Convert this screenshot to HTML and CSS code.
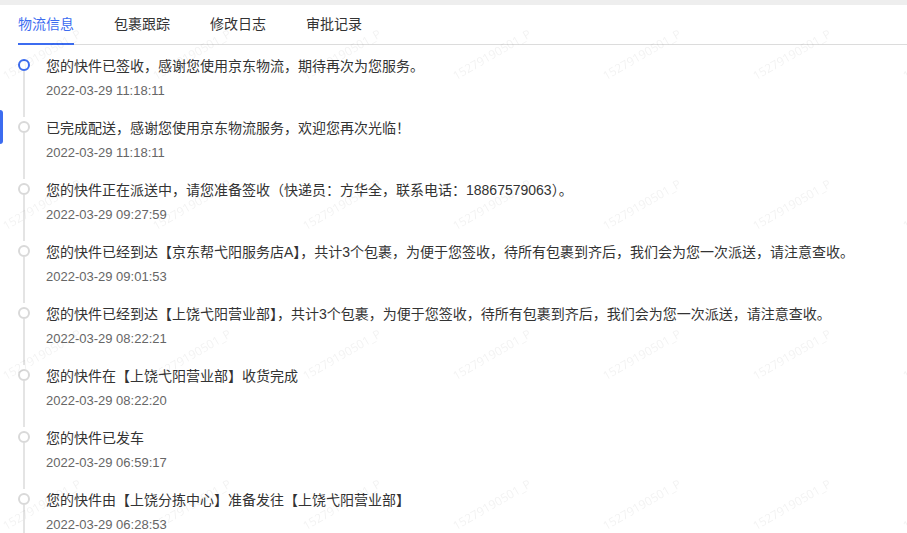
FILE: index.html
```html
<!DOCTYPE html>
<html lang="zh-CN">
<head>
  <meta charset="UTF-8">
  <meta name="viewport" content="width=device-width, initial-scale=1.0">
  <title>物流信息</title>
  <link rel="stylesheet" href="styles.css">
</head>
<body>
  <div class="topband"></div>

  <nav class="tabs">
    <span class="tab active">物流信息</span>
    <span class="tab">包裹跟踪</span>
    <span class="tab">修改日志</span>
    <span class="tab">审批记录</span>
  </nav>

  <ul class="timeline">
    <li class="item first">
      <div class="rail"><span class="dot"></span><span class="tail"></span></div>
      <div class="content">
        <div class="title">您的快件已签收，感谢您使用京东物流，期待再次为您服务。</div>
        <div class="time">2022-03-29 11:18:11</div>
      </div>
    </li>
    <li class="item">
      <div class="rail"><span class="dot"></span><span class="tail"></span></div>
      <div class="content">
        <div class="title">已完成配送，感谢您使用京东物流服务，欢迎您再次光临！</div>
        <div class="time">2022-03-29 11:18:11</div>
      </div>
    </li>
    <li class="item">
      <div class="rail"><span class="dot"></span><span class="tail"></span></div>
      <div class="content">
        <div class="title">您的快件正在派送中，请您准备签收（快递员：方华全，联系电话：18867579063）。</div>
        <div class="time">2022-03-29 09:27:59</div>
      </div>
    </li>
    <li class="item">
      <div class="rail"><span class="dot"></span><span class="tail"></span></div>
      <div class="content">
        <div class="title">您的快件已经到达【京东帮弋阳服务店A】，共计3个包裹，为便于您签收，待所有包裹到齐后，我们会为您一次派送，请注意查收。</div>
        <div class="time">2022-03-29 09:01:53</div>
      </div>
    </li>
    <li class="item">
      <div class="rail"><span class="dot"></span><span class="tail"></span></div>
      <div class="content">
        <div class="title">您的快件已经到达【上饶弋阳营业部】，共计3个包裹，为便于您签收，待所有包裹到齐后，我们会为您一次派送，请注意查收。</div>
        <div class="time">2022-03-29 08:22:21</div>
      </div>
    </li>
    <li class="item">
      <div class="rail"><span class="dot"></span><span class="tail"></span></div>
      <div class="content">
        <div class="title">您的快件在【上饶弋阳营业部】收货完成</div>
        <div class="time">2022-03-29 08:22:20</div>
      </div>
    </li>
    <li class="item">
      <div class="rail"><span class="dot"></span><span class="tail"></span></div>
      <div class="content">
        <div class="title">您的快件已发车</div>
        <div class="time">2022-03-29 06:59:17</div>
      </div>
    </li>
    <li class="item">
      <div class="rail"><span class="dot"></span><span class="tail"></span></div>
      <div class="content">
        <div class="title">您的快件由【上饶分拣中心】准备发往【上饶弋阳营业部】</div>
        <div class="time">2022-03-29 06:28:53</div>
      </div>
    </li>
  </ul>

  <div class="side-tab"></div>
  <div class="watermark" id="watermark"></div>

  <script>
    const wm = document.getElementById("watermark");
    for (let i = 0; i < 28; i++) {
      const cell = document.createElement("div");
      cell.className = "wm-cell";
      cell.innerHTML = '<span>15279190501_P</span>';
      wm.appendChild(cell);
    }
  </script>
</body>
</html>
```

FILE: styles.css
```css
html, body {
  margin: 0;
  padding: 0;
  background-color: #fff;
  overflow: hidden;
}
body {
  font-family: "Liberation Sans", "Noto Sans CJK SC", sans-serif;
  color: #333;
  height: 533px;
}
.topband {
  height: 5px;
  background-color: #eeeeee;
}
.tabs {
  display: flex;
  gap: 40px;
  margin-left: 18px;
  border-bottom: 1px solid #dcdcdc;
}
.tab {
  font-size: 14px;
  line-height: 22px;
  padding: 8px 0 8px;
  border-bottom: 2px solid transparent;
  margin-bottom: -1px;
  color: #333;
}
.tab.active {
  color: #3c6cf0;
  border-bottom-color: #3c6cf0;
}
.timeline {
  list-style: none;
  margin: 10px 0 0;
  padding: 0;
}
.item {
  display: flex;
}
.rail {
  width: 28px;
  padding-left: 18px;
  display: flex;
  flex-direction: column;
  flex-shrink: 0;
}
.dot {
  width: 8px;
  height: 8px;
  border: 2px solid #d9d9d9;
  border-radius: 50%;
  background-color: #fff;
  margin-top: 4px;
}
.first .dot {
  border-color: #3c6cf0;
}
.tail {
  flex: 1;
  width: 2px;
  margin-left: 5px;
  background-color: #e4e4e4;
}
.item:last-child .tail {
  min-height: 60px;
}
.content {
  padding-bottom: 16px;
}
.title {
  font-size: 14px;
  line-height: 22px;
  margin-bottom: 4px;
  color: #333;
}
.time {
  font-size: 13px;
  line-height: 20px;
  color: #666;
}
.side-tab {
  position: fixed;
  left: 0;
  top: 110px;
  width: 3px;
  height: 34px;
  background-color: #3c6cf0;
  border-radius: 0 3px 3px 0;
}
.watermark {
  position: fixed;
  top: 0;
  left: 0;
  width: 1050px;
  display: grid;
  grid-template-columns: repeat(7, 150px);
  grid-auto-rows: 150px;
  pointer-events: none;
}
.wm-cell span {
  display: block;
  width: max-content;
  margin: 47px 0 0 -2px;
  font-family: "Open Sans", sans-serif;
  font-size: 12px;
  line-height: 16px;
  color: rgba(0, 0, 0, 0.055);
  transform: rotate(-30deg);
}
```
